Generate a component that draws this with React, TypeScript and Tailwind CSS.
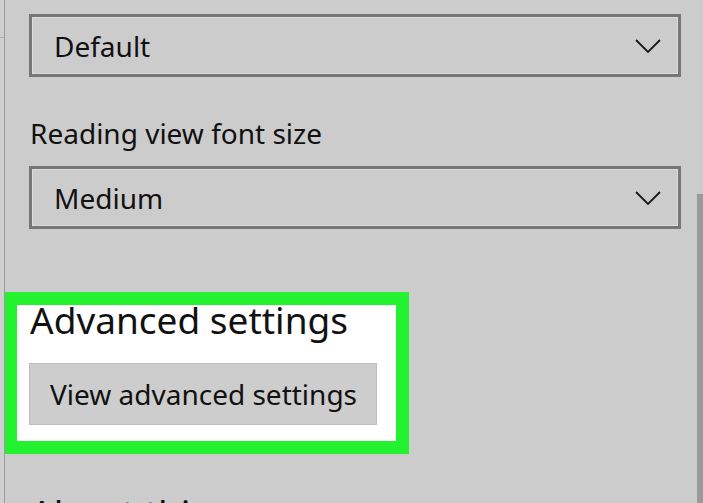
export default function App() {
  const font = { fontFamily: '"Noto Sans", "Open Sans", sans-serif' };

  return (
    <div
      className="w-[703px] h-[503px] overflow-hidden bg-[#cccccc] flex text-[#111111]"
      style={font}
    >
      {/* left pane edge */}
      <div className="w-[5px] shrink-0 flex flex-col border-r border-[#9c9c9c] bg-[#cfcfcf]">
        <div className="mt-[37px] h-px w-full bg-[#b0b0b0]" />
      </div>

      {/* settings column */}
      <div className="flex-1 flex flex-col pl-[24px] overflow-hidden">
        <Dropdown className="mt-[14px]" value="Default" />

        <div className="shrink-0 mt-[43px] mb-[20px] text-[28px] leading-[26px] pl-[1px]">
          Reading view font size
        </div>

        <Dropdown value="Medium" />

        <div className="shrink-0 mt-[63px] ml-[-25px] w-[405px] h-[162px] border-[13px] border-[#22f22f] bg-white pl-[12px] flex flex-col">
          <div className="text-[37px] leading-[30px] pl-[1px]">Advanced settings</div>
          <button className="shrink-0 mt-[28px] w-[348px] h-[62px] bg-[#cdcdcd] border border-[#bdbdbd] text-left pl-[20px] text-[28px]">
            View advanced settings
          </button>
        </div>

        <div className="shrink-0 mt-[40px] text-[37px] leading-none pl-[1px]">About this app</div>
      </div>

      {/* scrollbar */}
      <div className="w-[6px] shrink-0 flex flex-col pt-[194px]">
        <div className="flex-1 bg-[#9a9a9a]" />
      </div>
    </div>
  );
}

function Dropdown({ value, className = '' }: { value: string; className?: string }) {
  return (
    <div
      className={`shrink-0 w-[652px] h-[63px] border-[3px] border-[#777777] shadow-[inset_0_0_0_1px_#dcdcdc] flex items-center justify-between pl-[22px] pr-[17px] ${className}`}
    >
      <span className="text-[28px] leading-none">{value}</span>
      <svg width="26" height="14" viewBox="0 0 26 14" fill="none">
        <path d="M1 1 L13 13 L25 1" stroke="#1a1a1a" strokeWidth="1.8" />
      </svg>
    </div>
  );
}
